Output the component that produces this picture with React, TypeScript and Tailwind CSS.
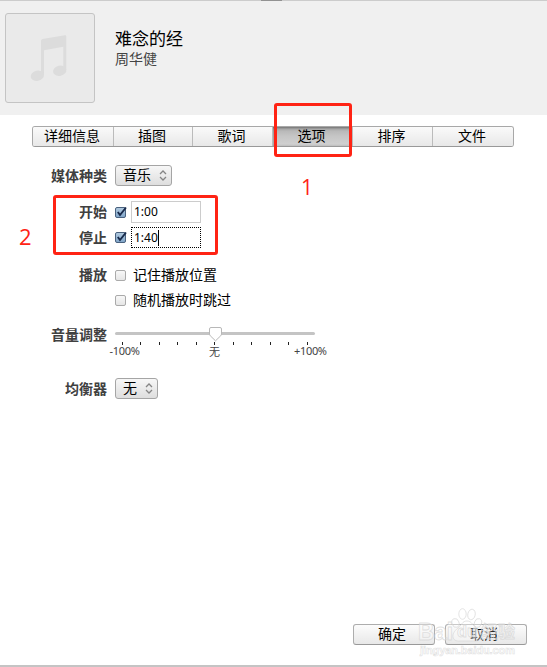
import type { ReactNode } from 'react'
import clsx from 'clsx'

const tabs = [
  { label: '详细信息', width: 'w-[81px]' },
  { label: '插图', width: 'w-[79px]' },
  { label: '歌词', width: 'w-[80px]' },
  { label: '选项', width: 'w-[80px]', active: true },
  { label: '排序', width: 'w-[80px]' },
  { label: '文件', width: 'w-[80px]' },
]

const ticks = [122, 140, 159, 177, 196, 214, 233, 251, 270, 288, 307]

const Label = ({ children }: { children?: ReactNode }) => (
  <div className="w-[107px] shrink-0 text-right font-bold text-[#404040]">{children}</div>
)

const Checkbox = ({ checked }: { checked?: boolean }) =>
  checked ? (
    <svg className="ml-2 h-[13px] w-[13px] shrink-0" viewBox="0 0 13 13">
      <defs>
        <linearGradient id="check-fill" x1="0" y1="0" x2="0" y2="1">
          <stop offset="0" stopColor="#b3cbe0" />
          <stop offset="1" stopColor="#7fa4c8" />
        </linearGradient>
      </defs>
      <rect x="0.5" y="1.5" width="10" height="10" rx="1.5" fill="url(#check-fill)" stroke="#49617e" />
      <path d="M2.8 6 L5 9 L11 1.5" fill="none" stroke="#17294a" strokeWidth="1.9" />
    </svg>
  ) : (
    <div className="mr-0.5 ml-2 h-[11px] w-[11px] shrink-0 rounded-[2px] border border-[#aaa] bg-linear-to-b from-[#f8f8f8] to-[#e6e6e6]" />
  )

const Select = ({ value, className }: { value: string; className: string }) => (
  <div
    className={clsx(
      'ml-2 flex h-[21px] items-center justify-between rounded-[3px] border border-[#a5a5a5] bg-linear-to-b from-[#f7f7f7] to-[#dedede] pr-1 pl-[7px]',
      className,
    )}
  >
    <span className="pb-0.5">{value}</span>
    <svg width="8" height="11" viewBox="0 0 8 11" fill="none" stroke="#858585" strokeWidth="1.3">
      <path d="M1 4 L4 1 L7 4 M1 7 L4 10 L7 7" />
    </svg>
  </div>
)

const Button = ({ children }: { children: ReactNode }) => (
  <button className="h-[21px] w-[82px] rounded-[3px] border border-[#adadad] border-b-[#999] bg-linear-to-b from-[#fcfcfc] to-[#e8e8e8] pr-1 pb-0.5 leading-[17px]">
    {children}
  </button>
)

const Watermark = () => (
  <svg className="pointer-events-none absolute top-[604px] left-[416px]" width="104" height="54" viewBox="0 0 104 54">
    <g fill="#fff" fillOpacity="0.35" stroke="#d6d6d6" strokeOpacity="0.75" strokeWidth="0.9">
      <ellipse cx="39.5" cy="19" rx="3.5" ry="4.5" transform="rotate(-20 39.5 19)" />
      <ellipse cx="46.5" cy="10" rx="3.7" ry="5.3" />
      <ellipse cx="55.5" cy="10.5" rx="3.7" ry="5.3" transform="rotate(12 55.5 10.5)" />
      <ellipse cx="62" cy="19" rx="3.5" ry="4.5" transform="rotate(20 62 19)" />
      <path d="M51 17 C46 17 46 21 42 24 C34 30 36 38 44 37 L58 37 C66 38 68 30 61 25 C57 22 56 17 51 17 Z" />
      <g fontFamily="Liberation Sans, Noto Sans CJK SC, sans-serif" fontWeight="bold">
        <text x="2" y="36" fontSize="24" textLength="35" lengthAdjust="spacingAndGlyphs">
          Bai
        </text>
        <text x="41" y="33" fontSize="17" textLength="20" lengthAdjust="spacingAndGlyphs">
          du
        </text>
        <text x="65" y="34" fontSize="17" textLength="34" lengthAdjust="spacingAndGlyphs">
          经验
        </text>
        <text x="4" y="50" fontSize="11" textLength="95" strokeWidth="0.6">
          jingyan.baidu.com
        </text>
      </g>
    </g>
  </svg>
)

const App = () => {
  return (
    <div className="relative flex h-[667px] w-[547px] flex-col overflow-hidden bg-white font-['Noto_Sans','Noto_Sans_CJK_SC',sans-serif] text-[14px] leading-5 text-black">
      <header className="flex h-[115px] shrink-0 border-t border-[#ccc] bg-[#f0f0f0] pl-[5px]">
        <div className="mt-3 h-[90px] w-[90px] rounded-[3px] border border-[#c4c4c4] bg-[#eaeaea]">
          <svg width="88" height="88" viewBox="6 14 88 88" fill="#dcdcdc">
            <path d="M41 41 Q41 39.4 42.5 39 L65 35.2 Q66.3 35 66.3 36.5 V70 H63.3 V46.7 L44 50.3 V75 H41 Z" />
            <ellipse cx="37.3" cy="75.8" rx="6.7" ry="5.1" transform="rotate(-12 37.3 75.8)" />
            <ellipse cx="59.7" cy="70.8" rx="6.7" ry="5.1" transform="rotate(-12 59.7 70.8)" />
          </svg>
        </div>
        <div className="mt-7 ml-5">
          <h1 className="text-[17px] leading-5">难念的经</h1>
          <p className="text-[14px] leading-5 text-[#444]">周华健</p>
        </div>
      </header>

      {/* 标签栏 */}
      <nav className="mt-[11px] ml-8 flex h-[21px] w-[482px] shrink-0 overflow-hidden rounded-[3px] border border-[#a8a8a8] border-b-[#999]">
        {tabs.map((tab) => (
          <div
            key={tab.label}
            className={clsx(
              'h-[19px] shrink-0 border-r border-[#bbb] pr-0.5 text-center leading-[17px] last:border-r-0',
              tab.width,
              tab.active
                ? 'bg-linear-to-b from-[#b0b0b0] via-[#c6c6c6] to-[#d2d2d2] shadow-[inset_0_1px_3px_#666]'
                : 'bg-linear-to-b from-[#fafafa] to-[#e8e8e8]',
            )}
          >
            {tab.label}
          </div>
        ))}
      </nav>

      <main className="flex shrink-0 flex-col">
        <div className="mt-[18px] flex h-[21px] items-center">
          <Label>媒体种类</Label>
          <Select value="音乐" className="w-[57px]" />
        </div>

        <div className="mt-[15px] flex h-[22px] items-center">
          <Label>开始</Label>
          <Checkbox checked />
          <div className="ml-[3px] flex h-[22px] w-[70px] items-center border border-[#ccc] pl-0.5 text-[12px]">1:00</div>
        </div>
        <div className="mt-1 flex h-[21px] items-center">
          <Label>停止</Label>
          <Checkbox checked />
          <div className="ml-[3px] flex h-[21px] w-[70px] items-center border border-dotted border-black pl-0.5 text-[12px]">
            1:40
            <span className="h-4 w-px bg-black" />
          </div>
        </div>

        <div className="mt-[17px] flex h-5 items-center">
          <Label>播放</Label>
          <Checkbox />
          <span className="ml-[5px]">记住播放位置</span>
        </div>
        <div className="mt-[5px] flex h-5 items-center">
          <Label />
          <Checkbox />
          <span className="ml-[5px]">随机播放时跳过</span>
        </div>

        {/* 音量滑块 */}
        <div className="mt-[15px] flex h-9">
          <Label>音量调整</Label>
          <svg className="ml-0.5 shrink-0" width="226" height="36" viewBox="109 325 226 36">
            <rect x="115" y="332" width="200" height="3" rx="1.5" fill="#c4c4c4" />
            {ticks.map((x) => (
              <rect key={x} x={x} y="342" width="1" height="3" fill="#222" />
            ))}
            <path
              d="M211 327.5 H220 Q221.5 327.5 221.5 329 V334 Q221.5 335 220.7 335.8 L215.5 340.8 L210.3 335.8 Q209.5 335 209.5 334 V329 Q209.5 327.5 211 327.5 Z"
              fill="#fff"
              stroke="#b8b8b8"
            />
            <g fontSize="11" fill="#444">
              <text x="109.5" y="355" textLength="30.5">-100%</text>
              <text x="209" y="355.5">无</text>
              <text x="294" y="355" textLength="33">+100%</text>
            </g>
          </svg>
        </div>

        <div className="mt-[17px] flex h-[21px] items-center">
          <Label>均衡器</Label>
          <Select value="无" className="w-[43px]" />
        </div>
      </main>

      <footer className="mt-auto flex shrink-0 justify-end gap-[10px] border-b-2 border-[#c4c4c4] pr-5 pb-5">
        <Button>确定</Button>
        <Button>取消</Button>
      </footer>

      {/* 标注 */}
      <div className="absolute top-0 left-[261px] h-px w-[21px] bg-[#929292]" />
      <div className="absolute top-[103px] left-[274px] h-[54px] w-[78px] rounded-[3px] border-3 border-[#ff2314]" />
      <div className="absolute top-[195px] left-[53px] h-[60px] w-[165px] rounded-[3px] border-3 border-[#ff2314]" />
      <span className="absolute top-[177px] left-[301px] font-['Open_Sans',sans-serif] text-[21px] leading-5 text-[#ff2314]">
        1
      </span>
      <span className="absolute top-[226px] left-[19px] font-['Open_Sans',sans-serif] text-[22px] leading-5 text-[#ff2314]">
        2
      </span>
      <Watermark />
    </div>
  )
}

export default App
